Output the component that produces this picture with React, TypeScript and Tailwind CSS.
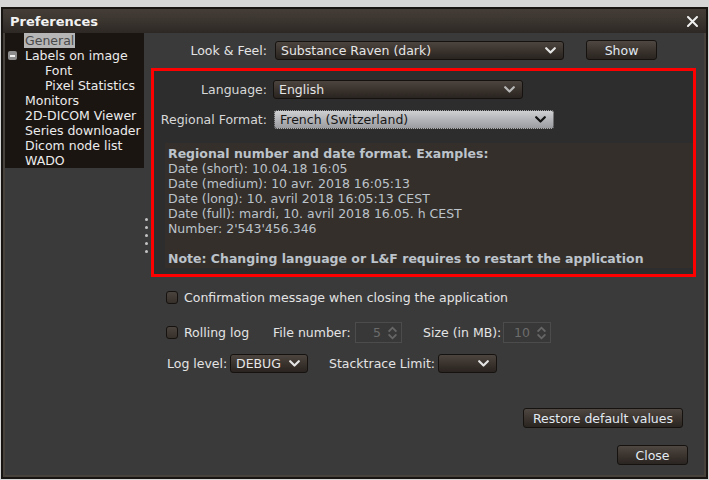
import React from 'react';

const tree = [
  { label: 'General', indent: 20, selected: true },
  { label: 'Labels on image', indent: 20, toggle: true },
  { label: 'Font', indent: 40 },
  { label: 'Pixel Statistics', indent: 40 },
  { label: 'Monitors', indent: 20 },
  { label: '2D-DICOM Viewer', indent: 20 },
  { label: 'Series downloader', indent: 20 },
  { label: 'Dicom node list', indent: 20 },
  { label: 'WADO', indent: 20 },
];

const examples = [
  'Date (short): 10.04.18 16:05',
  'Date (medium): 10 avr. 2018 16:05:13',
  'Date (long): 10. avril 2018 16:05:13 CEST',
  'Date (full): mardi, 10. avril 2018 16.05. h CEST',
  'Number: 2\'543\'456.346',
];

function Chevron({ color }: { color: string }) {
  return (
    <svg width="11" height="7" viewBox="0 0 11 7" className="shrink-0">
      <path d="M1.2 1.2 L5.5 5.5 L9.8 1.2" fill="none" stroke={color} strokeWidth="2.2" strokeLinecap="round" strokeLinejoin="round" />
    </svg>
  );
}

function Combo({ text, width, focused, chevron = '#e4e4e4' }: { text: string; width: string; focused?: boolean; chevron?: string }) {
  return (
    <div
      className={`${width} h-[19px] flex items-center justify-between pl-[5px] pr-[7px] rounded-[3px] border ${
        focused
          ? 'border-dotted border-[#2a2a2a] bg-linear-to-b from-[#cfd0d2] via-[#b4b5b8] to-[#9c9da0] text-[#161616]'
          : 'border-[#161210] bg-linear-to-b from-[#4c453f] via-[#3a332e] to-[#2a2420] text-[#e6e6e6]'
      }`}
    >
      <span className="truncate">{text}</span>
      <Chevron color={focused ? '#111111' : chevron} />
    </div>
  );
}

function Button({ text, width }: { text: string; width: string }) {
  return (
    <div className={`${width} h-[20px] flex items-center justify-center rounded-[3px] border border-[#161210] bg-linear-to-b from-[#4f4842] via-[#3b342f] to-[#2b2521] text-[#e2eaf2]`}>
      {text}
    </div>
  );
}

function Spinner({ value, width }: { value: string; width: string }) {
  return (
    <div className={`${width} h-[21px] flex items-center justify-end pr-[4px] border border-[#4c4c4c] bg-[#383838] text-[#6c6c6c]`}>
      <span className="mr-[7px]">{value}</span>
      <svg width="9" height="14" viewBox="0 0 9 14">
        <path d="M1.2 5 L4.5 1.7 L7.8 5" fill="none" stroke="#666" strokeWidth="1.8" strokeLinecap="round" />
        <path d="M1.2 9 L4.5 12.3 L7.8 9" fill="none" stroke="#666" strokeWidth="1.8" strokeLinecap="round" />
      </svg>
    </div>
  );
}

function Checkbox() {
  return <div className="w-[12px] h-[13px] rounded-[3px] border border-[#151210] bg-linear-to-b from-[#4a433e] to-[#362f2a] shrink-0" />;
}

export default function App() {
  return (
    <div className="w-[709px] h-[480px] bg-[#d6d6d6] pt-[7px] pl-[1px] overflow-hidden text-[12.5px] leading-[15px]" style={{ fontFamily: '"DejaVu Sans", sans-serif' }}>
      <div className="w-[707px] h-[472px] border-2 border-[#171412] bg-[#48423c] flex flex-col">
        {/* title bar */}
        <div className="h-[24px] shrink-0 flex items-center justify-between pl-[7px] pr-[8px] bg-linear-to-b from-[#443d37] via-[#3b3530] to-[#2d2824]">
          <span className="font-bold text-[13px] text-[#f2f2f2]">Preferences</span>
          <svg width="11" height="11" viewBox="0 0 11 11">
            <path d="M1 1 L10 10 M10 1 L1 10" stroke="#f0f0f0" strokeWidth="2" strokeLinecap="round" />
          </svg>
        </div>

        <div className="flex-1 mx-[2px] mb-[2px] bg-[#3a3a3a] flex">
          {/* tree */}
          <div className="w-[139px] h-[135px] bg-[#1b1511] text-[#ececec] shrink-0">
            {tree.map((item) => (
              <div key={item.label} className="h-[15px] flex items-center relative" style={{ paddingLeft: item.indent }}>
                {item.toggle && (
                  <div className="absolute left-[3px] top-[3px] w-[9px] h-[9px] rounded-[2px] bg-[#8d8d8d] flex items-center justify-center">
                    <div className="w-[5px] h-[2px] bg-[#f0f0f0]" />
                  </div>
                )}
                <span className={item.selected ? 'bg-[#b6b6b6] text-[#4a4a4a] px-[1px] -ml-[1px]' : ''}>{item.label}</span>
              </div>
            ))}
          </div>

          {/* splitter */}
          <div className="w-[6px] shrink-0 flex flex-col items-center pt-[185px] gap-[5px]">
            {[0, 1, 2, 3, 4].map((i) => (
              <div key={i} className="w-[3px] h-[3px] rounded-full bg-[#c4c4c4] -ml-[1px]" />
            ))}
          </div>

          {/* right panel */}
          <div className="flex-1 text-[#e4e4e4]">
            <div className="mt-[7px] h-[20px] flex items-center">
              <div className="w-[119px] text-right pr-[2px]">Look &amp; Feel:</div>
              <div className="ml-[6px]">
                <Combo text="Substance Raven (dark)" width="w-[289px]" />
              </div>
              <div className="ml-[22px]">
                <Button text="Show" width="w-[71px]" />
              </div>
            </div>

            <div className="mt-[8px] ml-[1px] w-[545px] h-[209px] border-[3px] border-[#ff0000] bg-[#2d2d2d]">
              <div className="mt-[9px] h-[19px] flex items-center">
                <div className="w-[115px] text-right pr-[2px] text-[#d8d8d8]">Language:</div>
                <div className="ml-[4px]">
                  <Combo text="English" width="w-[250px]" chevron="#b8b8b8" />
                </div>
              </div>
              <div className="mt-[11px] h-[19px] flex items-center">
                <div className="w-[115px] text-right pr-[2px] text-[#d8d8d8]">Regional Format:</div>
                <div className="ml-[5px]">
                  <Combo text="French (Switzerland)" width="w-[280px]" focused />
                </div>
              </div>
              <div className="mt-[14px] ml-[11px] h-[125px] bg-[#342f2b] pl-[3px] pt-[3px] text-[#bcc3ca]">
                <div className="font-bold">Regional number and date format. Examples:</div>
                {examples.map((line) => (
                  <div key={line}>{line}</div>
                ))}
                <div className="h-[15px]" />
                <div className="font-bold">Note: Changing language or L&amp;F requires to restart the application</div>
              </div>
            </div>

            <div className="mt-[12px] h-[16px] pl-[16px] flex items-center gap-[6px]">
              <Checkbox />
              <span>Confirmation message when closing the application</span>
            </div>

            <div className="mt-[17px] h-[21px] pl-[16px] flex items-center">
              <div className="w-[107px] flex items-center gap-[6px]">
                <Checkbox />
                <span>Rolling log</span>
              </div>
              <div className="w-[82px]">File number:</div>
              <Spinner value="5" width="w-[47px]" />
              <div className="ml-[21px] w-[80px]">Size (in MB):</div>
              <Spinner value="10" width="w-[48px]" />
            </div>

            <div className="mt-[11px] h-[19px] pl-[17px] flex items-center">
              <div className="w-[63px]">Log level:</div>
              <Combo text="DEBUG" width="w-[78px]" />
              <div className="ml-[21px] w-[109px]">Stacktrace Limit:</div>
              <Combo text="" width="w-[59px]" />
            </div>

            <div className="mt-[35px] ml-[373px]">
              <Button text="Restore default values" width="w-[160px]" />
            </div>
            <div className="mt-[17px] ml-[467px]">
              <Button text="Close" width="w-[71px]" />
            </div>
          </div>
        </div>
      </div>
    </div>
  );
}
